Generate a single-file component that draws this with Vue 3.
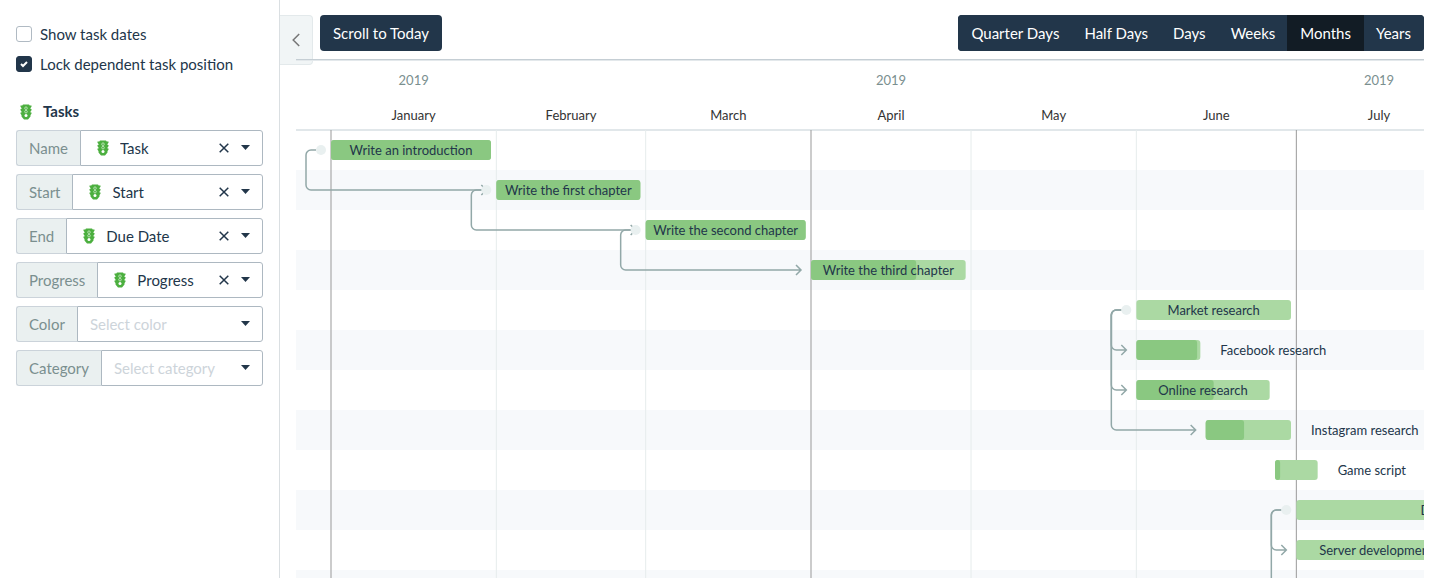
<script setup>
import { ref, reactive } from 'vue'

const showDates = ref(false)
const lockPosition = ref(true)
const activeView = ref('Months')
const views = ['Quarter Days', 'Half Days', 'Days', 'Weeks', 'Months', 'Years']

const fields = reactive([
  { label: 'Name', value: 'Task' },
  { label: 'Start', value: 'Start' },
  { label: 'End', value: 'Due Date' },
  { label: 'Progress', value: 'Progress' },
  { label: 'Color', value: '', placeholder: 'Select color' },
  { label: 'Category', value: '', placeholder: 'Select category' }
])

const DAY = 16 / 3
const START = 35
const HEADER = 70
const ROW = 40
const BAR = 20
const ROWS = 13

const dayX = (day) => START + day * DAY
const rowY = (row) => HEADER + row * ROW + ROW / 2

const months = [
  { name: 'January', day: 0, days: 31, year: '2019' },
  { name: 'February', day: 31, days: 28 },
  { name: 'March', day: 59, days: 31 },
  { name: 'April', day: 90, days: 30, year: '2019' },
  { name: 'May', day: 120, days: 31 },
  { name: 'June', day: 151, days: 30 },
  { name: 'July', day: 181, days: 31, year: '2019' }
].map((m) => ({ ...m, x: dayX(m.day), mid: dayX(m.day + m.days / 2) }))

const tasks = [
  { name: 'Write an introduction', day: 0, days: 30, progress: 1 },
  { name: 'Write the first chapter', day: 31, days: 27, progress: 1 },
  { name: 'Write the second chapter', day: 59, days: 30, progress: 1 },
  { name: 'Write the third chapter', day: 90, days: 29, progress: 0.68 },
  { name: 'Market research', day: 151, days: 29, progress: 0 },
  { name: 'Facebook research', day: 151, days: 12, progress: 0.95, outside: true },
  { name: 'Online research', day: 151, days: 25, progress: 0.58 },
  { name: 'Instagram research', day: 164, days: 16, progress: 0.45, outside: true },
  { name: 'Game script', day: 177, days: 8, progress: 0.12, outside: true },
  { name: 'Development', day: 181, days: 61, progress: 0 },
  { name: 'Server development', day: 181, days: 30, progress: 0 }
].map((t, i) => {
  const x = dayX(t.day)
  const w = t.days * DAY
  return { ...t, x, w, y: rowY(i), labelX: t.outside ? x + w + 20 : x + w / 2 }
})

const links = [[0, 1], [1, 2], [2, 3], [4, 5], [4, 6], [4, 7], [9, 10]].map(([from, to]) => {
  const a = tasks[from]
  const b = tasks[to]
  const left = a.x - 25
  const tip = b.x - 10
  return `M${a.x - 15} ${a.y}H${left + 5}a5 5 0 0 0 -5 5V${b.y - 5}a5 5 0 0 0 5 5H${tip}m-5 -5l5 5l-5 5`
})
const tail = `M${tasks[9].x - 15} ${tasks[9].y}H${tasks[9].x - 20}a5 5 0 0 0 -5 5V${rowY(12)}`
const handles = [0, 1, 2, 4, 9].map((i) => ({ x: tasks[i].x - 10, y: tasks[i].y }))
</script>

<template>
  <div class="page">
    <svg class="defs" aria-hidden="true">
      <symbol id="signal" viewBox="0 0 12 16">
        <path fill="#4caf3f" d="M3 .5h6l.7 1h1.800v1.200L10.500 4v1h1v1.200L10.500 7.500v1h1v1.200L10.500 11v1.500L8 15.500H4L1.500 12.500V11L.5 9.700V8.500h1v-1L.5 6.200V5h1V4L.5 2.700V1.500h1.800z" />
        <circle cx="6" cy="4.200" r="1.300" fill="none" stroke="#d9f0d5" stroke-width=".7" />
        <circle cx="6" cy="7.700" r="1.300" fill="none" stroke="#d9f0d5" stroke-width=".7" />
        <circle cx="6" cy="11.500" r="1.500" fill="#fff" />
      </symbol>
    </svg>

    <aside class="sidebar">
      <div class="checks">
        <label class="check">
          <span class="box"><input v-model="showDates" type="checkbox" /><svg v-if="showDates" width="16" height="16"><path d="M5 8l2 2 4-4" /></svg></span>
          Show task dates
        </label>
        <label class="check">
          <span class="box"><input v-model="lockPosition" type="checkbox" /><svg v-if="lockPosition" width="16" height="16"><path d="M5 8l2 2 4-4" /></svg></span>
          Lock dependent task position
        </label>
      </div>

      <h2 class="heading"><svg class="signal"><use href="#signal" /></svg>Tasks</h2>

      <div class="fields">
        <div v-for="f in fields" :key="f.label" class="field">
          <label class="field-label" :for="'field-' + f.label">{{ f.label }}</label>
          <div class="control" :class="{ filled: f.value }">
            <svg v-if="f.value" class="signal"><use href="#signal" /></svg>
            <select :id="'field-' + f.label" v-model="f.value" :class="{ empty: !f.value }">
              <option v-if="f.placeholder" value="">{{ f.placeholder }}</option>
              <option v-if="f.value" :value="f.value">{{ f.value }}</option>
            </select>
            <button v-if="f.value" class="clear" type="button" :aria-label="'Clear ' + f.label">
              <svg width="10" height="10"><path d="M.7 .7l8.600 8.600M9.300 .7l-8.600 8.600" /></svg>
            </button>
            <svg class="caret" width="9" height="5"><path d="M0 0h9L4.500 5z" /></svg>
          </div>
        </div>
      </div>
    </aside>

    <main class="main">
      <button class="collapse" type="button" aria-label="Collapse panel">
        <svg width="8" height="14"><path d="M7.200 1L1.200 7l6 6" /></svg>
      </button>
      <header class="toolbar">
        <button class="btn" type="button">Scroll to Today</button>
        <div class="group">
          <button
            v-for="v in views"
            :key="v"
            class="btn"
            :class="{ active: v === activeView }"
            type="button"
            @click="activeView = v"
          >{{ v }}</button>
        </div>
      </header>

      <div class="chart">
        <svg width="100%" :height="HEADER + ROWS * ROW" role="img" aria-label="Task schedule">
          <rect class="edge" width="100%" height="1" />
          <g v-for="r in ROWS" :key="r">
            <rect v-if="r % 2 === 0" class="stripe" :y="HEADER + (r - 1) * ROW" width="100%" :height="ROW" />
          </g>
          <rect class="rule" :y="HEADER - 1" width="100%" height="2" />
          <line
            v-for="m in months"
            :key="m.name"
            :class="m.year ? 'quarter' : 'tick'"
            :x1="m.x"
            :x2="m.x"
            :y1="HEADER"
            y2="100%"
          />
          <g v-for="m in months" :key="m.name">
            <text v-if="m.year" class="year" :x="m.mid" y="25">{{ m.year }}</text>
            <text class="month" :x="m.mid" y="60">{{ m.name }}</text>
          </g>
          <path v-for="(d, i) in links" :key="i" class="link" :d="d" />
          <path class="link" :d="tail" />
          <circle v-for="h in handles" :key="h.y" class="handle" :cx="h.x" :cy="h.y" r="5" />
          <g v-for="t in tasks" :key="t.name">
            <rect class="bar" :x="t.x" :y="t.y - BAR / 2" :width="t.w" :height="BAR" rx="3" />
            <rect class="done" :x="t.x" :y="t.y - BAR / 2" :width="t.w * t.progress" :height="BAR" rx="3" />
            <text class="label" :class="{ outside: t.outside }" :x="t.labelX" :y="t.y + 5">{{ t.name }}</text>
          </g>
        </svg>
      </div>
    </main>
  </div>
</template>

<style>
body {
  margin: 0;
  background: #fff;
}
</style>

<style scoped>
.page {
  display: flex;
  height: 100vh;
  overflow: hidden;
  font-family: Lato, sans-serif;
  font-size: 15px;
  line-height: 20px;
  color: #22364a;
}
.defs {
  position: absolute;
  width: 0;
  height: 0;
}
button,
select {
  font: inherit;
  color: inherit;
  margin: 0;
  border: 0;
  background: none;
}
.sidebar {
  flex: none;
  box-sizing: border-box;
  width: 280px;
  padding: 24px 16px;
  border-right: 1px solid #dadfe2;
}
.checks {
  display: flex;
  flex-direction: column;
  gap: 10px;
}
.check {
  display: flex;
  align-items: center;
  gap: 8px;
}
.box {
  display: grid;
}
.box > * {
  grid-area: 1 / 1;
}
.box input {
  appearance: none;
  box-sizing: border-box;
  width: 16px;
  height: 16px;
  margin: 0;
  border: 1px solid #b0bac3;
  border-radius: 3px;
  background: #fff;
}
.box input:checked {
  border-color: #22364a;
  background: #22364a;
}
.box svg {
  pointer-events: none;
  fill: none;
  stroke: #fff;
  stroke-width: 2;
}
.signal {
  flex: none;
  width: 12px;
  height: 16px;
}
.heading {
  display: flex;
  align-items: center;
  gap: 11px;
  margin: 27px 0 8px;
  padding-left: 4px;
  font-size: 15px;
  font-weight: 700;
  line-height: 21px;
}
.fields {
  display: flex;
  flex-direction: column;
  gap: 8px;
}
.field {
  display: flex;
  height: 36px;
}
.field-label {
  box-sizing: border-box;
  padding: 7px 12px;
  border: 1px solid #cbd3da;
  border-right: 0;
  border-radius: 3px 0 0 3px;
  background: #eaf0f0;
  color: #7a8f8f;
}
.control {
  flex: 1;
  min-width: 0;
  display: flex;
  align-items: center;
  box-sizing: border-box;
  padding: 0 12px;
  border: 1px solid #adb8c1;
  border-radius: 0 3px 3px 0;
}
.control.filled {
  padding-left: 16px;
}
.control .signal {
  margin-right: 11px;
}
.control select {
  appearance: none;
  flex: 1;
  min-width: 0;
  padding: 0;
  height: 34px;
}
.control select.empty {
  color: #cdd4da;
}
.clear {
  display: flex;
  padding: 0;
  margin-right: 12px;
}
.clear svg {
  fill: none;
  stroke: #22364a;
  stroke-width: 1.5;
}
.caret {
  flex: none;
  margin-bottom: 2px;
  fill: #22364a;
  pointer-events: none;
}
.main {
  position: relative;
  flex: 1;
  min-width: 0;
  display: flex;
  flex-direction: column;
  padding: 0 6px 0 16px;
}
.collapse {
  position: absolute;
  left: 0;
  top: 15px;
  z-index: -1;
  box-sizing: border-box;
  width: 33px;
  height: 50px;
  padding: 0 0 0 12px;
  border: 1px solid #e3e9eb;
  border-left: 0;
  border-radius: 0 4px 4px 0;
  background: #f1f5f6;
}
.collapse svg {
  display: block;
  fill: none;
  stroke: #777;
  stroke-width: 1.5;
}
.toolbar {
  display: flex;
  justify-content: space-between;
  padding: 15px 0 8px 24px;
  border-bottom: 1px solid #c5ced4;
}
.btn {
  height: 36px;
  padding: 0 13px;
  border-radius: 4px;
  background: #22364a;
  color: #fff;
  white-space: nowrap;
}
.group {
  display: flex;
  border-radius: 4px;
  overflow: hidden;
  background: #22364a;
}
.group .btn {
  border-radius: 0;
}
.group .btn + .btn {
  margin-left: -1px;
}
.group .btn.active {
  position: relative;
  background: #121c25;
}
.chart {
  flex: 1;
  min-height: 0;
  overflow: hidden;
}
.chart svg {
  display: block;
}
.edge {
  fill: #e3e8eb;
}
.stripe {
  fill: #f7f9fb;
}
.rule {
  fill: #e1e7ea;
}
.tick {
  stroke: #e6ecec;
}
.quarter {
  stroke: #999;
}
.year,
.month,
.label {
  font-size: 13px;
  text-anchor: middle;
}
.year {
  fill: #7a8f8f;
}
.month {
  fill: #333;
}
.label {
  fill: #22364a;
}
.label.outside {
  text-anchor: start;
}
.link {
  fill: none;
  stroke: #92a8a8;
  stroke-width: 1.5;
}
.handle {
  fill: #e9f0f0;
}
.bar {
  fill: #abd9a3;
}
.done {
  fill: #8ac881;
}
</style>
